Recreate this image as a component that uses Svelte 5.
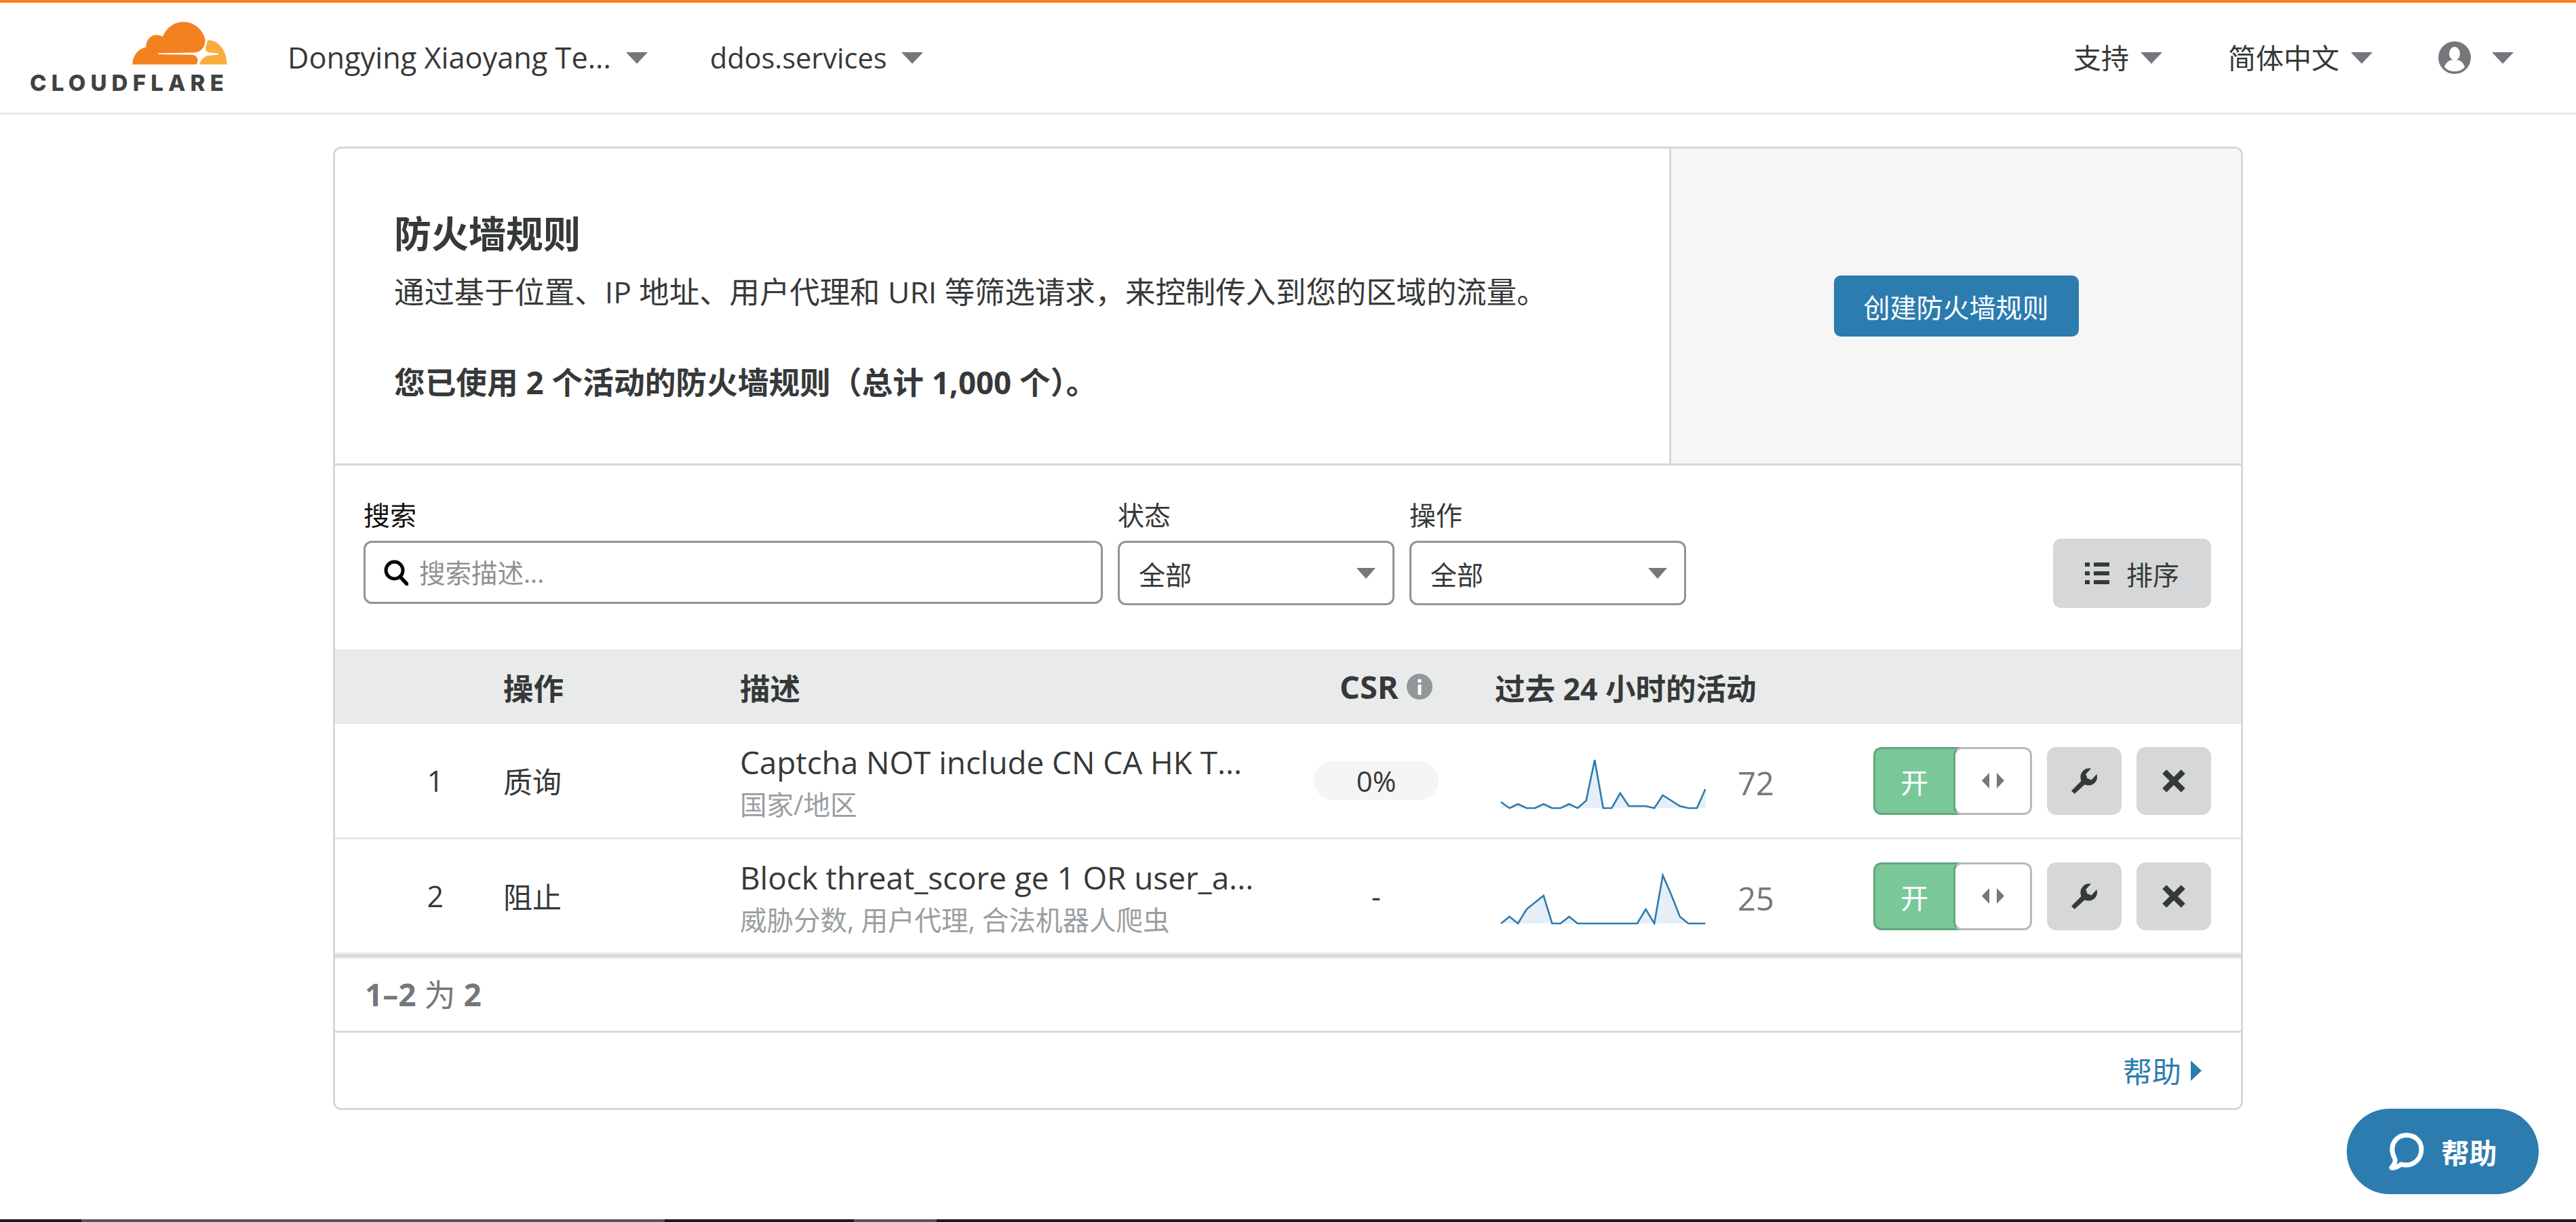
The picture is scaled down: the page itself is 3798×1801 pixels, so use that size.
<script>
  // sparkline points are px above the baseline, one per hour
  const rows = [
    {
      index: 1,
      action: '质询',
      title: 'Captcha NOT include CN CA HK T...',
      sub: '国家/地区',
      csr: '0%',
      count: 72,
      points: [9, 0, 6, 0, 0, 6, 0, 0, 6, 0, 11, 71, 0, 0, 22, 3, 3, 3, 0, 19, 11, 3, 0, 0, 28]
    },
    {
      index: 2,
      action: '阻止',
      title: 'Block threat_score ge 1 OR user_a...',
      sub: '威胁分数, 用户代理, 合法机器人爬虫',
      csr: null,
      count: 25,
      points: [0, 10, 0, 21, 31, 41, 0, 0, 10, 0, 0, 0, 0, 0, 0, 0, 0, 21, 0, 71, 42, 10, 0, 0, 0]
    }
  ];

  const step = 12.56;
  const base = 74;

  function line_points(points) {
    return points.map((p, i) => `${(i * step + 1).toFixed(1)},${base - p}`).join(' ');
  }

  function area_points(points) {
    return `1,${base} ${line_points(points)} ${(24 * step + 1).toFixed(1)},${base}`;
  }
</script>

<div class="page">
  <header class="topbar">
    <div class="logo">
      <svg class="cloud" viewBox="515 68 426 196" aria-hidden="true">
        <path fill="#f48120" d="M518 261C520 215 550 188 578 185C576 155 600 128 625 130C635 130 645 133 652 138C670 95 705 72 745 72C795 72 835 112 841 152C842 170 835 185 825 195C815 205 805 207 790 208L632 211L632 216L785 218C800 220 808 232 808 242C808 250 805 256 802 261Z"/>
        <path fill="#faad3f" d="M852 153C900 150 938 200 938 261L815 261C820 245 830 232 850 222L900 218L900 212L860 208C845 205 840 195 845 180Z"/>
      </svg>
      <span class="wordmark">CLOUDFLARE</span>
    </div>
    <button class="nav_item account">Dongying Xiaoyang Te...<i class="caret"></i></button>
    <button class="nav_item domain">ddos.services<i class="caret"></i></button>
    <div class="nav_right">
      <button class="nav_item support">支持<i class="caret"></i></button>
      <button class="nav_item lang">简体中文<i class="caret"></i></button>
      <button class="nav_item user">
        <svg class="avatar" viewBox="0 0 48 48" aria-hidden="true">
          <circle cx="24" cy="24" r="24" fill="#74787c"/>
          <ellipse cx="24" cy="18" rx="8" ry="10" fill="#fff"/>
          <path fill="#fff" d="M9 38c2-8 8-11 15-11s13 3 15 11a21 21 0 0 1-30 0z"/>
        </svg>
        <i class="caret"></i>
      </button>
    </div>
  </header>

  <main class="card">
    <section class="hero">
      <div class="hero_text">
        <h2>防火墙规则</h2>
        <p>通过基于位置、IP 地址、用户代理和 URI 等筛选请求，来控制传入到您的区域的流量。</p>
        <p class="usage">您已使用 2 个活动的防火墙规则（总计 1,000 个）。</p>
      </div>
      <div class="hero_side">
        <button class="create">创建防火墙规则</button>
      </div>
    </section>

    <section class="filters">
      <div class="field search">
        <label for="search_input">搜索</label>
        <div class="search_box">
          <svg class="search_icon" viewBox="0 0 36 38" aria-hidden="true">
            <circle cx="15.5" cy="15.5" r="12.5" fill="none" stroke="#000" stroke-width="5"/>
            <path d="M24 25l10 11" stroke="#000" stroke-width="5.5" stroke-linecap="round"/>
          </svg>
          <input id="search_input" placeholder="搜索描述..." />
        </div>
      </div>
      <div class="field status">
        <span class="field_label">状态</span>
        <div class="select">全部<i class="caret"></i></div>
      </div>
      <div class="field op">
        <span class="field_label">操作</span>
        <div class="select">全部<i class="caret"></i></div>
      </div>
      <button class="sort">
        <svg viewBox="0 0 36 32" aria-hidden="true">
          <path fill="#36393a" d="M0 0h7v6H0zM13 0h23v6H13zM0 13h7v6H0zM13 13h23v6H13zM0 26h7v6H0zM13 26h23v6H13z"/>
        </svg>
        排序
      </button>
    </section>

    <section class="table">
      <div class="row head">
        <span></span>
        <span>操作</span>
        <span>描述</span>
        <span class="csr_head"><span class="csr_text">CSR</span>
          <svg class="info" viewBox="0 0 38 38" aria-hidden="true">
            <circle cx="19" cy="19" r="19" fill="#92979a"/>
            <path fill="#fff" d="M16.5 8h5v5h-5zM16.5 16h5v15h-5z"/>
          </svg>
        </span>
        <span>过去 24 小时的活动</span>
        <span></span>
      </div>

      {#each rows as row}
        <div class="row item">
          <span class="num">{row.index}</span>
          <span>{row.action}</span>
          <div class="desc">
            <div class="title">{row.title}</div>
            <div class="sub">{row.sub}</div>
          </div>
          <div class="csr">
            {#if row.csr}
              <span class="pill">{row.csr}</span>
            {:else}
              <span class="dash">-</span>
            {/if}
          </div>
          <div class="activity">
            <svg class="spark" viewBox="0 0 304 76" aria-hidden="true">
              <polygon points={area_points(row.points)} fill="#e6eff7"/>
              <polyline points={line_points(row.points)} fill="none" stroke="#2c7cb0" stroke-width="2.6"/>
            </svg>
            <span class="count">{row.count}</span>
          </div>
          <div class="actions">
            <div class="toggle">
              <span class="toggle_on">开</span>
              <span class="toggle_knob">
                <svg viewBox="0 0 33 24" aria-hidden="true">
                  <path fill="#74787c" d="M11 0v23L0 11.5zM22 0l11 11.5L22 23z"/>
                </svg>
              </span>
            </div>
            <button class="icon_btn" aria-label="编辑">
              <svg class="wrench" viewBox="0 0 100 100" aria-hidden="true">
                <path fill="#36393a" d="M0 88L38 50C30 30 40 8 60 2C66 0 72 0 76 2L56 24L62 40L78 46L98 24C102 34 100 50 90 58C80 68 64 70 52 64L12 100Z"/>
              </svg>
            </button>
            <button class="icon_btn" aria-label="删除">
              <svg class="cross" viewBox="0 0 34 34" aria-hidden="true">
                <path d="M4 4l26 26M30 4L4 30" stroke="#36393a" stroke-width="8"/>
              </svg>
            </button>
          </div>
        </div>
      {/each}
    </section>

    <div class="pager"><b>1–2</b> 为 <b>2</b></div>

    <div class="help_row">
      <a href="#help">帮助<i class="arrow"></i></a>
    </div>
  </main>

  <button class="help_float">
    <svg viewBox="0 0 52 56" aria-hidden="true">
      <path fill="none" stroke="#fff" stroke-width="7" stroke-linejoin="round" d="M26 4C14 4 5 13 5 25c0 5 2 10 4 14 1 3 0 7-5 13 4 1 10-2 14-5 3 1 5 1 8 1 12 0 22-10 22-23S38 4 26 4z"/>
    </svg>
    帮助
  </button>

  <div class="strip">
    <span class="seg one"></span>
    <span class="seg two"></span>
  </div>
</div>

<style>
  :global(body) {
    margin: 0;
    background: #fff;
  }

  * {
    box-sizing: border-box;
  }

  .page {
    display: flex;
    flex-direction: column;
    min-height: 1801px;
    font-family: "Open Sans", "Noto Sans CJK SC", sans-serif;
    font-size: 40px;
    color: #36393a;
  }

  button {
    font: inherit;
    color: inherit;
    border: 0;
    background: none;
    padding: 0;
  }

  .caret {
    display: inline-block;
    width: 0;
    height: 0;
    border-left: 16px solid transparent;
    border-right: 16px solid transparent;
    border-top: 17px solid #74787c;
  }

  /* top bar */
  .topbar {
    display: flex;
    align-items: center;
    height: 169px;
    border-top: 4px solid #f48120;
    border-bottom: 3px solid #e8e9e9;
    padding-left: 43px;
    padding-right: 92px;
  }

  .logo {
    display: flex;
    flex-direction: column;
    align-items: flex-end;
    width: 290px;
    flex: none;
  }

  .cloud {
    width: 142px;
    height: 65px;
    display: block;
    margin-right: -3px;
  }

  .wordmark {
    font-family: Inter, sans-serif;
    font-weight: 800;
    font-size: 33px;
    line-height: 34px;
    letter-spacing: 7.2px;
    margin-top: 9px;
    margin-right: -4px;
    color: #404242;
    white-space: nowrap;
  }

  .nav_item {
    display: flex;
    align-items: center;
    font-size: 41px;
    line-height: 60px;
    white-space: nowrap;
  }

  .nav_item .caret {
    margin-left: 17px;
  }

  .account {
    font-size: 43.3px;
    margin-left: 91px;
  }

  .domain {
    font-size: 41.5px;
    margin-left: 92px;
  }

  .account .caret,
  .domain .caret {
    margin-left: 22px;
  }

  .nav_right {
    display: flex;
    align-items: center;
    margin-left: auto;
  }

  .lang,
  .user {
    margin-left: 97px;
  }

  .avatar {
    width: 48px;
    height: 48px;
  }

  .user .caret {
    margin-left: 31px;
  }

  /* card */
  .card {
    width: 2816px;
    margin: 47px auto 0;
    border: 3px solid #d5d7d8;
    border-radius: 12px;
    overflow: hidden;
  }

  .hero {
    display: flex;
    height: 467px;
    border-bottom: 3px solid #d5d7d8;
  }

  .hero_text {
    flex: 1;
    padding: 86px 0 0 87px;
  }

  h2 {
    margin: 0;
    font-size: 55px;
    line-height: 78px;
    font-weight: 700;
  }

  .hero_text p {
    margin: 0;
    font-size: 44.4px;
    line-height: 60px;
    margin-top: 17px;
  }

  .hero_text p.usage {
    font-size: 45.7px;
    font-weight: 700;
    margin-top: 73px;
  }

  .hero_side {
    display: flex;
    align-items: center;
    justify-content: center;
    width: 843px;
    background: #f6f6f6;
    border-left: 3px solid #d5d7d8;
  }

  .create {
    width: 361px;
    height: 90px;
    background: #2c7cb0;
    color: #fff;
    border-radius: 10px;
    font-size: 39px;
  }

  /* filters */
  .filters {
    display: flex;
    gap: 22px;
    padding: 48px 44px 65px 42px;
  }

  .field {
    display: flex;
    flex-direction: column;
    align-self: flex-start;
  }

  .field label,
  .field_label {
    font-size: 39px;
    line-height: 50px;
    margin-bottom: 13px;
  }

  .field label {
    color: #111;
  }

  .search {
    width: 1090px;
  }

  .search_box {
    display: flex;
    align-items: center;
    height: 93px;
    border: 3px solid #909497;
    border-radius: 12px;
    padding-left: 27px;
  }

  .search_icon {
    width: 36px;
    height: 38px;
    flex: none;
  }

  input {
    flex: 1;
    min-width: 0;
    margin-left: 14px;
    border: 0;
    outline: 0;
    background: none;
    font: inherit;
    font-size: 38.5px;
    color: inherit;
  }

  input::placeholder {
    color: #8d9194;
    opacity: 1;
  }

  .status,
  .op {
    width: 408px;
  }

  .select {
    display: flex;
    align-items: center;
    justify-content: space-between;
    height: 95px;
    border: 3px solid #909497;
    border-radius: 12px;
    padding: 0 25px 0 28px;
    font-size: 39px;
  }

  .select .caret {
    border-left-width: 14px;
    border-right-width: 14px;
    border-top-width: 16px;
  }

  .sort {
    display: flex;
    align-items: center;
    justify-content: center;
    gap: 25px;
    align-self: flex-end;
    margin-left: auto;
    margin-bottom: -4px;
    width: 233px;
    height: 102px;
    background: #d5d7d8;
    border-radius: 12px;
    font-size: 39px;
  }

  .sort svg {
    width: 36px;
    height: 32px;
  }

  /* table */
  .table {
    border-bottom: 3px solid #d5d7d8;
  }

  .row {
    display: grid;
    grid-template-columns: 248px 349px 846px 267px 558px 1fr;
    align-items: center;
    font-size: 43px;
  }

  .head {
    height: 110px;
    background: #e9ebeb;
    font-weight: 700;
    font-size: 44.5px;
  }

  .csr_head {
    display: flex;
    align-items: center;
    gap: 12px;
    padding-left: 38px;
  }

  .csr_text {
    font-size: 47px;
  }

  .info {
    width: 38px;
    height: 38px;
  }

  .item {
    height: 170px;
    border-bottom: 3px solid #e8e9e9;
  }

  .num {
    text-align: right;
    padding-right: 88px;
  }

  .desc {
    white-space: nowrap;
  }

  .title {
    font-size: 45.8px;
    line-height: 60px;
    margin-top: 2px;
  }

  .sub {
    font-size: 39.5px;
    line-height: 50px;
    margin-top: 8px;
    color: #9a9ea1;
  }

  .csr {
    width: 184px;
    text-align: center;
  }

  .pill {
    display: block;
    height: 57px;
    line-height: 57px;
    border-radius: 29px;
    background: #f5f5f5;
    font-size: 42px;
  }

  .activity {
    display: flex;
    align-items: center;
    margin-left: 8px;
  }

  .spark {
    width: 304px;
    height: 76px;
    margin-top: 8px;
    flex: none;
  }

  .count {
    margin-left: 46px;
    margin-top: 6px;
    color: #74787c;
    font-size: 47px;
  }

  .actions {
    display: flex;
    align-items: center;
    justify-content: flex-end;
    gap: 22px;
    padding-right: 44px;
  }

  .toggle {
    display: flex;
    width: 234px;
    height: 100px;
  }

  .toggle_on {
    flex: 1;
    display: flex;
    align-items: center;
    justify-content: center;
    margin-right: -12px;
    padding-right: 12px;
    background: #7ac89a;
    border: 3px solid #64a57d;
    border-right: 0;
    border-radius: 12px 0 0 12px;
    color: #fff;
    font-size: 41px;
  }

  .toggle_knob {
    position: relative;
    display: flex;
    align-items: center;
    justify-content: center;
    width: 116px;
    background: #fff;
    border: 3px solid #b6babd;
    border-left-color: #64a57d;
    border-radius: 12px;
  }

  .toggle_knob svg {
    width: 33px;
    height: 24px;
  }

  .icon_btn {
    display: flex;
    align-items: center;
    justify-content: center;
    width: 110px;
    height: 100px;
    background: #d5d7d8;
    border-radius: 14px;
  }

  .wrench {
    width: 38px;
    height: 38px;
  }

  .cross {
    width: 36px;
    height: 36px;
  }

  /* footers */
  .pager {
    height: 112px;
    border-top: 3px solid #e8e9e9;
    border-bottom: 3px solid #d5d7d8;
    padding-left: 44px;
    line-height: 104px;
    color: #74787c;
    font-size: 46px;
  }

  .help_row {
    display: flex;
    justify-content: flex-end;
    align-items: center;
    height: 111px;
    padding-right: 58px;
  }

  .help_row a {
    display: flex;
    align-items: center;
    color: #2c7cb0;
    text-decoration: none;
    font-size: 43px;
  }

  .arrow {
    width: 0;
    height: 0;
    margin-left: 14px;
    border-top: 15px solid transparent;
    border-bottom: 15px solid transparent;
    border-left: 16px solid #2c7cb0;
  }

  .help_float {
    position: absolute;
    left: 3460px;
    top: 1634px;
    width: 283px;
    height: 126px;
    display: flex;
    align-items: center;
    justify-content: center;
    gap: 26px;
    background: #2c7cb0;
    border-radius: 63px;
    color: #fff;
    font-weight: 700;
    font-size: 41px;
  }

  .help_float svg {
    width: 52px;
    height: 56px;
  }

  .strip {
    display: flex;
    margin-top: auto;
    height: 4px;
    background: #1a1a1a;
  }

  .seg {
    height: 4px;
    background: #555;
  }

  .seg.one {
    margin-left: 120px;
    width: 860px;
  }

  .seg.two {
    margin-left: 279px;
    width: 122px;
  }
</style>
